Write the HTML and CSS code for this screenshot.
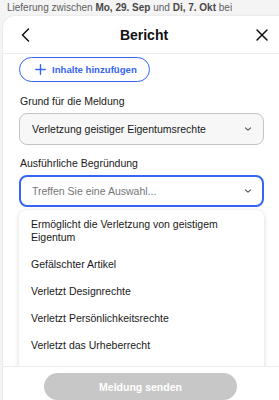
FILE: index.html
```html
<!DOCTYPE html>
<html lang="de">
<head>
<meta charset="utf-8">
<link rel="stylesheet" href="styles.css">
</head>
<body>
<div class="backdrop">
  <p class="behind">Lieferung zwischen <b>Mo, 29. Sep</b> und <b>Di, 7. Okt</b> bei</p>
  <div class="modal">
    <header class="head">
      <button class="icon-btn" aria-label="Zurück">
        <svg width="14" height="14" viewBox="0 0 14 14"><path d="M9.5 1 3.5 7 9.5 13" fill="none" stroke="#111" stroke-width="1.5" stroke-linecap="round" stroke-linejoin="round"/></svg>
      </button>
      <h1 class="title">Bericht</h1>
      <button class="icon-btn" aria-label="Schließen">
        <svg width="14" height="14" viewBox="0 0 14 14"><path d="M2 2 12 12M12 2 2 12" fill="none" stroke="#111" stroke-width="1.5" stroke-linecap="round"/></svg>
      </button>
    </header>
    <main class="scroll">
      <button class="add-btn">
        <svg width="11" height="11" viewBox="0 0 11 11"><path d="M5.5 0.8v9.4M0.8 5.5h9.4" stroke="#3665f3" stroke-width="1.4" stroke-linecap="round"/></svg>
        <span>Inhalte hinzufügen</span>
      </button>
      <div class="field">
        <label class="label">Grund für die Meldung</label>
        <div class="select filled">
          <span>Verletzung geistiger Eigentumsrechte</span>
          <svg class="chev" width="8" height="6" viewBox="0 0 8 6"><path d="M1.4 1.8 4 4.2 6.6 1.8" fill="none" stroke="#555" stroke-width="1.1" stroke-linecap="round" stroke-linejoin="round"/></svg>
        </div>
      </div>
      <div class="field second">
        <label class="label">Ausführliche Begründung</label>
        <div class="select-wrap">
          <div class="select focused">
            <span class="placeholder">Treffen Sie eine Auswahl...</span>
            <svg class="chev" width="8" height="6" viewBox="0 0 8 6"><path d="M1.4 1.8 4 4.2 6.6 1.8" fill="none" stroke="#555" stroke-width="1.1" stroke-linecap="round" stroke-linejoin="round"/></svg>
          </div>
          <ul class="menu">
            <li>Ermöglicht die Verletzung von geistigem Eigentum</li>
            <li>Gefälschter Artikel</li>
            <li>Verletzt Designrechte</li>
            <li>Verletzt Persönlichkeitsrechte</li>
            <li>Verletzt das Urheberrecht</li>
            <li>Verletzt Markenrechte</li>
          </ul>
        </div>
      </div>
    </main>
    <footer class="foot">
      <button class="send" disabled>Meldung senden</button>
    </footer>
  </div>
</div>
</body>
</html>
```
FILE: styles.css
```css
* { box-sizing: border-box; }
html, body { margin: 0; padding: 0; }
body {
  width: 279px;
  height: 400px;
  overflow: hidden;
  background: #f4f4f4;
  font-family: "Liberation Sans", Arial, sans-serif;
  color: #111;
}
.backdrop {
  height: 400px;
  display: flex;
  flex-direction: column;
}
.behind {
  margin: 0;
  padding: 0 0 0 7px;
  height: 16px;
  font-size: 10px;
  line-height: 15px;
  color: #5f5f5f;
  white-space: nowrap;
}
.behind b { font-weight: 700; color: #484848; }
.modal {
  margin-left: 3px;
  width: 290px;
  flex: 1;
  min-height: 0;
  background: #fff;
  border-radius: 12px 12px 0 0;
  box-shadow: 0 0 2px rgba(0,0,0,0.12);
  display: flex;
  flex-direction: column;
  overflow: hidden;
}
.head {
  height: 38px;
  flex: none;
  display: grid;
  grid-template-columns: 40px 1fr 40px;
  align-items: center;
  padding: 0 10px 0 16px;
  border-bottom: 1px solid #ececec;
  width: 276px;
}
.icon-btn {
  background: none;
  border: 0;
  padding: 0;
  width: 14px;
  height: 14px;
  display: flex;
  cursor: pointer;
}
.head .icon-btn:last-child { justify-self: end; }
.title {
  margin: 0;
  text-align: center;
  font-size: 14px;
  font-weight: 700;
}
.scroll {
  flex: 1;
  min-height: 0;
  overflow: hidden;
  padding: 3px 0 0 16px;
  width: 277px;
}
.add-btn {
  display: flex;
  align-items: center;
  gap: 6px;
  height: 25px;
  padding: 0 12px 0 15px;
  border: 1px solid #3665f3;
  border-radius: 13px;
  background: #fff;
  color: #3665f3;
  font-family: inherit;
  font-size: 9.6px;
  font-weight: 700;
}
.field { margin-top: 12px; }
.field.second { margin-top: 11px; }
.label {
  display: block;
  font-size: 10.5px;
  line-height: 14px;
  margin-bottom: 5px;
  padding-left: 1px;
  color: #191919;
}
.select {
  width: 245px;
  height: 32px;
  border-radius: 8px;
  display: flex;
  align-items: center;
  justify-content: space-between;
  padding: 0 11px 0 12px;
  font-size: 10.5px;
  color: #191919;
}
.select.filled {
  background: #f7f7f7;
  border: 1px solid #c4c4c4;
}
.select.focused {
  background: #fff;
  border: 2px solid #3665f3;
  padding: 0 10px 0 11px;
}
.placeholder { color: #767676; }
.chev { flex: none; }
.select-wrap { position: relative; }
.menu {
  position: absolute;
  left: 0;
  top: 35px;
  width: 245px;
  margin: 0;
  padding: 1px 0;
  list-style: none;
  background: #fff;
  border-radius: 8px;
  box-shadow: 0 1px 5px rgba(0,0,0,0.16);
}
.menu li {
  padding: 7px 12px;
  font-size: 10.5px;
  line-height: 13px;
  color: #191919;
}
.foot {
  flex: none;
  height: 34px;
  border-top: 1px solid #ececec;
  padding: 6px 0 0 41px;
  background: #fff;
  position: relative;
  z-index: 1;
}
.send {
  width: 193px;
  height: 27px;
  border: 0;
  border-radius: 14px;
  background: #c7c7c7;
  color: #fff;
  font-family: inherit;
  font-size: 10.5px;
  font-weight: 700;
}
```
